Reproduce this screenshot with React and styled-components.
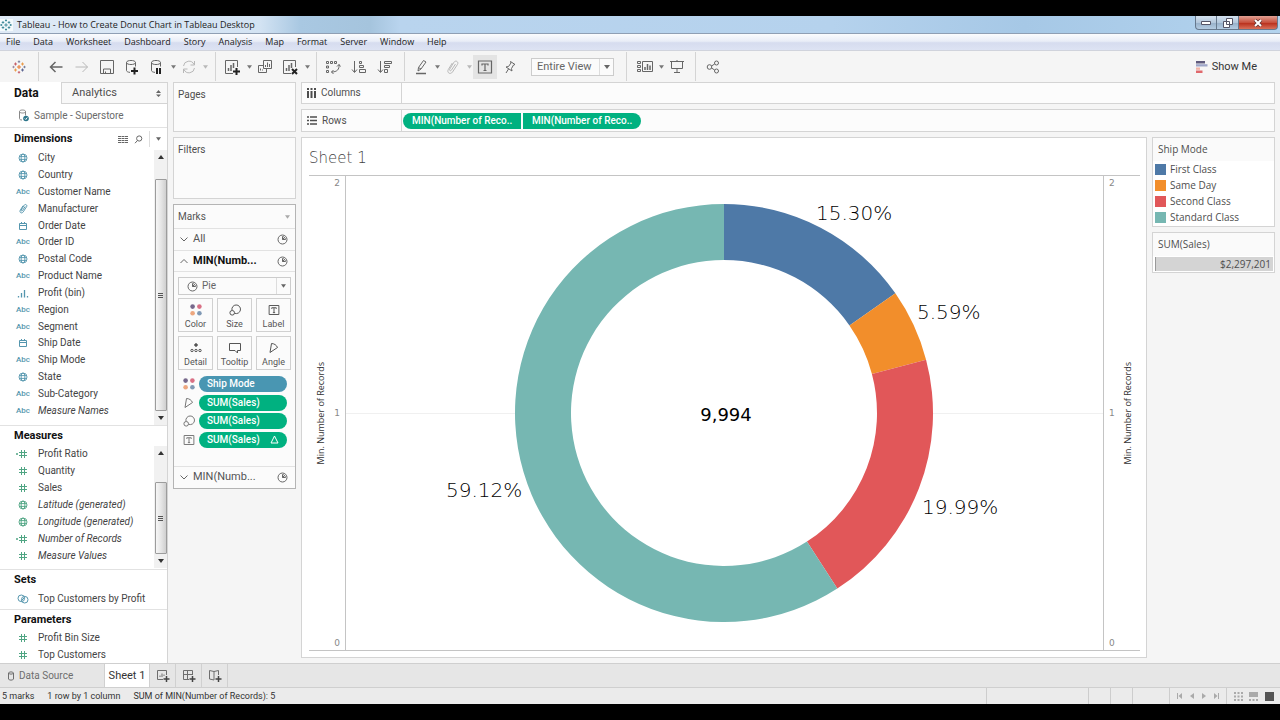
import React, {useState} from 'react';
import styled, {createGlobalStyle, css} from 'styled-components';

const GlobalStyle = createGlobalStyle`
  * {
    box-sizing: border-box;
  }
  body {
    margin: 0;
    background-color: #000;
  }
  button, select {
    margin: 0;
    padding: 0;
    border: 0;
    background: none;
    color: inherit;
    font: inherit;
  }
  svg {
    display: block;
    flex: none;
  }
`;

const uiFont = `Roboto, "Liberation Sans", sans-serif`;
const systemFont = `"Open Sans", "Noto Sans", sans-serif`;
const chartFont = `"DejaVu Sans", sans-serif`;
const line = '#d4d4d4';
const blue = '#4996b2';
const green = '#00b180';

const Window = styled.div`
  display: flex;
  flex-direction: column;
  min-height: 100vh;
  border: solid #000;
  border-width: 16px 0;
  background-color: #f5f5f5;
  color: #4e4e4e;
  font-family: ${uiFont};
  font-size: 10px;
  line-height: 16px;
`;

/* title bar and menu */

const TitleBar = styled.header`
  display: flex;
  align-items: center;
  height: 18px;
  padding-right: 2px;
  border-bottom: 1px solid #8f9fb4;
  background: linear-gradient(90deg, #dfeaf6 0, #d3e3f3 260px, #a9c8e2 300px, #a5c4dd 370px, #b9d4ee 400px, #b5d2ed 65%, #a6c8e6 80%, #b3d3ee 100%);
`;

const AppIcon = styled.span`
  display: flex;
  width: 13px;
  margin-right: 4px;
  background-color: #f4fafc;
`;

const WindowTitle = styled.h1`
  flex: 1;
  margin: 0;
  color: #222;
  font-family: ${systemFont};
  font-size: 9px;
  font-weight: 400;
  line-height: 16px;
`;

const WindowButton = styled.button`
  display: flex;
  align-items: center;
  justify-content: center;
  align-self: flex-start;
  width: ${props => props.$close ? '39px' : '22px'};
  height: 14px;
  border: 1px solid #66788c;
  border-top: 0;
  border-left-width: ${props => props.$first ? '1px' : 0};
  border-radius: ${props => props.$close ? '0 0 4px 0' : props.$first ? '0 0 0 4px' : 0};
  background: ${props => props.$close
    ? 'linear-gradient(#e0a093, #c8503d 50%, #b9301c 55%, #d8705a)'
    : 'linear-gradient(#d3e1ee, #b4c8dc 50%, #98b1ca 55%, #b4cce2)'};
`;

const MenuBar = styled.nav`
  display: flex;
  height: 17px;
  border-bottom: 1px solid #d0d3dc;
  background: linear-gradient(#fbfcfe, #e9edf7 45%, #d6dcef 55%, #dde3f3);
`;

const MenuItem = styled.button`
  padding: 0 7px 0 6px;
  color: #1c1c1c;
  font-family: ${systemFont};
  font-size: 9px;
  line-height: 16px;
`;

/* toolbar */

const Toolbar = styled.div`
  display: flex;
  align-items: center;
  height: 31px;
  padding-right: 23px;
  background-color: #f5f5f5;
`;

const ToolGroup = styled.div`
  display: flex;
  align-items: center;
  height: 29px;
  padding-left: ${props => props.$left || 0}px;
  padding-right: ${props => props.$right || 0}px;
  border-right: 1px solid ${props => props.$last ? 'transparent' : line};
`;

const ToolButton = styled.button`
  display: flex;
  align-items: center;
  justify-content: center;
  width: ${props => props.$wide ? '26px' : '24px'};
  height: 24px;
  color: ${props => props.$off ? '#b8b8b8' : '#666'};
  background-color: ${props => props.$pressed ? '#e4e4e4' : 'transparent'};
`;

const LogoButton = styled(ToolButton)`
  width: 38px;
`;

const CaretButton = styled.button`
  display: flex;
  align-items: center;
  justify-content: center;
  width: 8px;
  height: 24px;
  color: ${props => props.$off ? '#b8b8b8' : '#777'};
`;

const ShowMe = styled.button`
  display: flex;
  align-items: center;
  gap: 4px;
  margin-left: auto;
  color: #333;
  font-size: 11px;
`;

const SelectBox = styled.label`
  display: flex;
  align-items: center;
  height: 18px;
  border: 1px solid #ccc;
  background-color: #fbfbfb;
  color: #666;
  ${props => props.$toolbar ? css`
    width: 83px;
    margin-left: 8px;
    padding-left: 5px;
    font-size: 11px;
  ` : css`
    margin: 5px 4px 0;
    padding-left: 8px;
  `}

  select {
    flex: 1;
    min-width: 0;
    margin-left: ${props => props.$toolbar ? 0 : '4px'};
    appearance: none;
    outline: 0;
  }
`;

const SelectArrow = styled.span`
  display: flex;
  align-items: center;
  justify-content: center;
  width: 14px;
  height: 16px;
  border-left: 1px solid #ddd;
`;

/* data pane */

const Body = styled.div`
  display: flex;
  flex: 1;
`;

const DataPane = styled.aside`
  display: flex;
  flex-direction: column;
  width: 168px;
  border-right: 1px solid ${line};
  background-color: #fff;
`;

const PaneTabs = styled.div`
  display: flex;
  height: 22px;
`;

const PaneTab = styled.button`
  display: flex;
  align-items: center;
  justify-content: space-between;
  text-align: left;
  ${props => props.$active ? css`
    width: 61px;
    padding-left: 14px;
    color: #111;
    font-size: 12px;
    font-weight: 700;
  ` : css`
    flex: 1;
    padding: 0 6px 0 10px;
    border: solid ${line};
    border-width: 1px 0 1px 1px;
    background-color: #f8f8f8;
    font-size: 11px;
  `}
`;

const DataSource = styled.button`
  display: flex;
  align-items: center;
  gap: 5px;
  height: 24px;
  padding-left: 18px;
  border-bottom: 1px solid #e2e2e2;
  color: #6a6a6a;
`;

const Section = styled.section`
  padding-bottom: ${props => props.$bottom || 0}px;
  border-bottom: ${props => props.$last ? 0 : '1px solid #e2e2e2'};
`;

const SectionHead = styled.div`
  display: flex;
  align-items: center;
  gap: 6px;
  height: ${props => props.$tall ? '22px' : '20px'};
  padding: 0 6px 0 14px;
  color: #666;

  h2 {
    flex: 1;
    margin: 0;
    color: #111;
    font-size: 11px;
    font-weight: 700;
  }
`;

const SectionBody = styled.div`
  display: flex;
  align-items: flex-start;
`;

const FieldList = styled.ul`
  display: grid;
  grid-auto-rows: 1fr;
  flex: 1;
  height: ${props => props.$height}px;
  margin: 0;
  padding: 0;
  list-style: none;
`;

const Field = styled.li`
  display: flex;
  align-items: center;
  color: #444;
  font-style: ${props => props.$italic ? 'italic' : 'normal'};
  white-space: nowrap;
`;

const FieldIcon = styled.span`
  display: flex;
  justify-content: center;
  width: 30px;
  margin-left: 8px;
  color: ${props => props.$measure ? '#4fa583' : '#5596ae'};
`;

const AbcIcon = styled.b`
  font-size: 8px;
  font-style: normal;
  font-weight: 500;
`;

const ScrollBar = styled.div`
  display: flex;
  flex-direction: column;
  align-items: center;
  width: 13px;
  height: ${props => props.$height}px;
  background-color: #f1f1f1;
`;

const ScrollArrow = styled.button`
  display: flex;
  align-items: center;
  justify-content: center;
  width: 13px;
  height: 14px;
  color: #333;
`;

const ScrollThumb = styled.div`
  display: flex;
  align-items: center;
  justify-content: center;
  flex: 1;
  width: 12px;
  margin-top: ${props => props.$offset}px;
  border: 1px solid #9c9c9c;
  border-radius: 1px;
  background: linear-gradient(90deg, #f6f6f6, #e6e6e6 50%, #cfcfcf);
  color: #555;
`;

/* cards */

const Cards = styled.div`
  display: flex;
  flex-direction: column;
  gap: 5px;
  width: 123px;
  margin-left: 5px;
`;

const Card = styled.section`
  border: 1px solid ${props => props.$strong ? '#b4b4b4' : line};
  background-color: #fbfbfb;
`;

const DropCard = styled(Card)`
  height: ${props => props.$tall ? '62px' : '50px'};
  padding: 4px 4px;

  h2 {
    margin: 0;
    font-size: 10px;
    font-weight: 400;
  }
`;

const CardHead = styled.div`
  display: flex;
  align-items: center;
  justify-content: space-between;
  height: 23px;
  padding: 0 5px 0 4px;
  color: #aaa;

  h2 {
    margin: 0;
    color: #555;
    font-size: 10px;
    font-weight: 400;
  }
`;

const MarkLayer = styled.button`
  display: flex;
  align-items: center;
  gap: 4px;
  width: 100%;
  height: 22px;
  padding: 0 7px 0 5px;
  border-top: 1px solid #e2e2e2;
  border-bottom: 1px solid ${props => props.$open ? '#e2e2e2' : 'transparent'};
  color: #666;
  font-size: 11px;
  text-align: left;

  span {
    flex: 1;
    color: ${props => props.$open ? '#111' : '#555'};
    font-weight: ${props => props.$open ? 700 : 400};
  }
`;

const MarkButtons = styled.div`
  display: grid;
  grid-template-columns: repeat(3, 1fr);
  gap: 4px;
  padding: 3px 4px 0;
`;

const MarkButton = styled.button`
  display: flex;
  flex-direction: column;
  align-items: center;
  justify-content: space-between;
  height: 34px;
  padding-top: 5px;
  border: 1px solid #d0d0d0;
  color: #555;
  font-size: 9px;
  line-height: 14px;
`;

const PillList = styled.ul`
  display: grid;
  grid-auto-rows: 1fr;
  height: 74px;
  margin: 5px 0 17px;
  padding: 0 8px 0 9px;
  list-style: none;

  li {
    display: flex;
    align-items: center;
    color: #777;
  }
`;

const PillIcon = styled.span`
  display: flex;
  justify-content: center;
  width: 12px;
  margin-right: 4px;
`;

const Pill = styled.button`
  display: flex;
  align-items: center;
  justify-content: space-between;
  height: 16px;
  background-color: ${props => props.$dimension ? blue : green};
  color: #fff;
  font-weight: 500;
  white-space: nowrap;
  ${props => props.$shelf ? css`
    width: 118px;
    padding: 0 9px;
    border-radius: ${props.$shelf === 'left' ? '8px 0 0 8px' : '0 8px 8px 0'};
  ` : css`
    flex: 1;
    padding: 0 8px;
    border-radius: 8px;
  `}
`;

/* worksheet */

const Main = styled.main`
  display: flex;
  flex-direction: column;
  flex: 1;
  gap: 5px;
  min-width: 0;
  margin: 0 5px 5px;
`;

const Shelf = styled.section`
  display: flex;
  height: ${props => props.$tall ? '23px' : '22px'};
  border: 1px solid ${line};
  background-color: #fcfcfc;
`;

const ShelfName = styled.div`
  display: flex;
  align-items: center;
  gap: 5px;
  width: 100px;
  padding-left: 5px;
  border-right: 1px solid ${line};
`;

const ShelfPills = styled.div`
  display: flex;
  align-items: center;
  gap: 2px;
  padding-left: 1px;
`;

const SheetRow = styled.div`
  display: flex;
  flex: 1;
  gap: 5px;
`;

const Sheet = styled.section`
  display: flex;
  flex-direction: column;
  flex: 1;
  min-width: 0;
  padding: 0 6px 6px 7px;
  border: 1px solid ${line};
  background-color: #fff;

  h2 {
    height: 37px;
    margin: 0;
    color: #444;
    font-family: ${chartFont};
    font-size: 15px;
    font-weight: 200;
    line-height: 40px;
  }
`;

const Chart = styled.div`
  display: flex;
  flex: 1;
  border: solid #c4c4c4;
  border-width: 1px 0;
`;

const Axis = styled.div`
  display: flex;
  align-items: center;
  justify-content: space-between;
  flex-direction: ${props => props.$right ? 'row-reverse' : 'row'};
  width: 36px;
  padding: ${props => props.$right ? '0 4px 0 5px' : '0 5px 0 4px'};
  font-family: ${systemFont};
`;

const AxisTitle = styled.span`
  color: #333;
  font-size: 9px;
  line-height: 16px;
  writing-mode: vertical-rl;
  transform: rotate(180deg);
`;

const Ticks = styled.div`
  display: flex;
  flex-direction: column;
  justify-content: space-between;
  align-self: stretch;
  color: #888;
  font-family: ${chartFont};
  font-size: 9px;
  line-height: 14px;
`;

const Plot = styled.div`
  display: flex;
  flex: 1;
  min-width: 0;
  border: solid #c4c4c4;
  border-width: 0 1px;
  overflow: hidden;

  svg {
    width: 100%;
    height: 474px;
    overflow: visible;
  }

  text {
    fill: #000;
    font-family: ${chartFont};
    font-size: 20px;
    font-weight: 200;
  }
`;

const CenterLabel = styled.text`
  && {
    font-size: 18px;
    font-weight: 400;
  }
`;

const Legends = styled.aside`
  display: flex;
  flex-direction: column;
  gap: 5px;
  width: 123px;
  font-family: ${systemFont};
`;

const Legend = styled.section`
  padding-bottom: 1px;
  border: 1px solid ${line};
  background-color: #fff;

  h3 {
    margin: 0;
    padding-left: 5px;
    background-color: #fafafa;
    font-size: 10px;
    font-weight: 400;
    line-height: 23px;
  }

  ul {
    margin: 0;
    padding: 0;
    list-style: none;
  }

  li {
    display: flex;
    align-items: center;
    gap: 4px;
    height: 16px;
    padding-left: 2px;
  }
`;

const Swatch = styled.span`
  width: 11px;
  height: 11px;
  background-color: ${props => props.$color};
`;

const SizeBar = styled.div`
  margin: 1px 1px 0 2px;
  padding-right: 2px;
  border-left: 1px solid #999;
  background-color: #d4d4d4;
  line-height: 14px;
  text-align: right;
`;

/* sheet tabs and status bar */

const SheetTabs = styled.div`
  display: flex;
  height: 24px;
  border-top: 1px solid #cfcfcf;
  background-color: #e6e6e6;
`;

const SheetTab = styled.button`
  display: flex;
  align-items: center;
  justify-content: ${props => props.$source ? 'flex-start' : 'center'};
  gap: 4px;
  width: ${props => props.$source ? '105px' : props.$active ? '45px' : '26px'};
  padding-left: ${props => props.$source ? '7px' : 0};
  border-right: 1px solid #d0d0d0;
  background-color: ${props => props.$active ? '#fff' : 'transparent'};
  color: ${props => props.$active ? '#333' : '#6e6e6e'};
  font-size: ${props => props.$active ? '11px' : '10px'};
  white-space: nowrap;
`;

const StatusBar = styled.footer`
  display: flex;
  gap: 13px;
  height: 17px;
  padding-left: 2px;
  border-top: 1px solid #cfcfcf;
  background-color: #ebebeb;
  color: #333;
  font-size: 9px;
`;

const StatusCells = styled.div`
  display: flex;
  margin-left: auto;
`;

const StatusCell = styled.div`
  display: flex;
  align-items: center;
  justify-content: space-evenly;
  width: ${props => props.$width}px;
  border-left: 1px solid #cdcdcd;
  color: #aaa;
`;

const StatusButton = styled.button`
  display: flex;
  color: ${props => props.$active ? '#555' : '#aaa'};
`;

/* icons */

function Icon({size = 16, height, children, ...rest}) {
  return (
    <svg width={size} height={height || size} viewBox={`0 0 ${size} ${height || size}`}
      fill="none" stroke="currentColor" strokeWidth="1" aria-hidden="true" {...rest}>
      {children}
    </svg>
  );
}

const Caret = ({size = 5}) => (
  <svg width={size} height="4" viewBox="0 0 6 4" aria-hidden="true"><path d="M0 0h6L3 4z" fill="currentColor" /></svg>
);

const CaretUp = () => (
  <svg width="6" height="4" viewBox="0 0 6 4" aria-hidden="true"><path d="M0 4h6L3 0z" fill="currentColor" /></svg>
);

const crosses = [
  [7, 7, 2, '#e8762d'], [3.5, 4, 1.5, '#c7606a'], [10.5, 4, 1.5, '#eb9c4b'],
  [3.5, 10, 1.5, '#eb9c4b'], [10.5, 10, 1.5, '#5c6692'],
  [7, 1.7, 1.2, '#7a7f9c'], [7, 12.3, 1.2, '#c7606a'], [1.5, 7, 1.2, '#a08aa0'], [12.5, 7, 1.2, '#7a7f9c'],
];

const Logo = ({size = 14, mono}) => (
  <svg width={size} height={size} viewBox="0 0 14 14" aria-hidden="true">
    {crosses.map(([x, y, r, color]) => (
      <path key={`${x}-${y}`} d={`M${x - r} ${y}h${2 * r}M${x} ${y - r}v${2 * r}`} stroke={mono || color} strokeWidth="1" />
    ))}
  </svg>
);

const ArrowLeft = () => <Icon strokeWidth="1.5"><path d="M14.5 8H2.5M7.500 3L2.500 8l5 5" /></Icon>;
const ArrowRight = () => <Icon><path d="M1.500 8h12M8.500 3l5 5-5 5" /></Icon>;
const Save = () => <Icon><path d="M1.500 1.500h13v13h-13zM4.500 14v-4h7v4M6.500 12.500v1.500" /></Icon>;
const Cylinder = () => <path d="M2.500 3.500c0-2.700 9-2.700 9 0M2.500 3.500c0 2.700 9 2.700 9 0M2.500 3.500v8c0 1 1.500 1.700 3.500 1.900M11.500 3.500v4" />;
const DataAdd = () => <Icon><Cylinder /><path d="M10.500 8.500v7M7 12h7" stroke="#222" strokeWidth="2" /></Icon>;
const DataPause = () => <Icon><Cylinder /><path d="M8 9v6M11 9v6" stroke="#222" strokeWidth="2" /></Icon>;
const Refresh = () => <Icon><path d="M2.500 7a5.500 5.500 0 0 1 10.500-1.500M13.500 9A5.500 5.500 0 0 1 3 10.500M13.500 2v4h-4M2.500 14v-4h4" /></Icon>;
const Bars = () => <path d="M4.500 9v3M7 6v6M9.500 4v5" strokeWidth="1.5" />;
const ChartAdd = () => <Icon><path d="M9 14.500H1.500v-13h12V8" /><Bars /><path d="M12.500 9v7M9 12.500h7" stroke="#222" strokeWidth="2" /></Icon>;
const ChartClear = () => <Icon><path d="M9 14.500H1.500v-13h12V8" /><Bars /><path d="M10 10l5 5M15 10l-5 5" stroke="#222" strokeWidth="2" /></Icon>;
const Duplicate = () => <Icon><path d="M6.500 1.500h8v8h-8zM6 6.500H1.500v7h8v-3.500M8.500 8V6M10.500 8V3.500M12.500 8V5M3.500 11.500v-2M5.500 11.500v-1" /></Icon>;
const Swap = () => <Icon><path d="M1.500 2.500h2v2h-2zM5.500 2.500h2v2h-2zM9.500 2.500h2v2h-2zM1.500 7h2v2h-2zM1.500 11.500h2v2h-2zM14 5.500c.5 5-2 7.500-7.500 7.500M12 7.500l2-2 1.500 2M8.500 11l-2 2 2 2" /></Icon>;
const SortAsc = () => <Icon><path d="M3.500 2v11M1 10.500l2.500 3 2.500-3M8.500 2.500h2v2h-2zM8.500 6.500h4v2h-4zM8.500 10.500h6v3h-6z" /></Icon>;
const SortDesc = () => <Icon><path d="M3.500 2v11M1 10.500l2.500 3 2.500-3M7.500 2.500h7v2h-7zM7.500 6.500h5v2h-5zM7.500 10.500h3v3h-3z" /></Icon>;
const Pen = () => <Icon><path d="M5 12l.5-3.500 5-7 2.500 1.500-5 7zM5.500 8.500L8 10" /><path d="M3 14.500h10" strokeWidth="1.500" /></Icon>;
const Clip = ({size = 16}) => (
  <svg width={size} height={size} viewBox="0 0 16 16" fill="none" stroke="currentColor" strokeWidth={size < 14 ? 1.4 : 1} aria-hidden="true">
    <path d="M10.500 5l-4 6c-.8 1.500-2.500.5-1.800-.8l4.300-7c1.500-2.300 5-.5 3.500 2.200l-5 7.600c-2 3-6 .8-4.200-2.500l4-6.500" />
  </svg>
);
const LabelT = ({size = 16}) => (
  <svg width={size} height={size} viewBox="0 0 16 16" fill="none" stroke="currentColor" strokeWidth={size < 14 ? 1.3 : 1.2} aria-hidden="true">
    <path d="M1.500 2h13v12h-13zM5 6.500V5h6v1.500M8 5v6.500M6.500 11.500h3" />
  </svg>
);
const Pin = () => <Icon><path d="M8.500 2.500l4.500 3-1.500.5-2 3.500.5 2.500-6-4 2.500-.5L9 4zM6.500 10L4 14" /></Icon>;
const Gallery = () => (
  <Icon size={18}>
    <path d="M6.500 3.500h10v10h-10zM1.500 3.500h3v2h-3zM1.500 7.500h3v2h-3zM1.500 11.500h3v2h-3z" />
    <path d="M9 12V9M11.500 12V6M14 12V7.500" strokeWidth="1.500" />
  </Icon>
);
const Present = () => <Icon><path d="M1 2.500h14M2.500 2.500v7h11v-7M8 9.500v4M5 13.500h6M8 1v1" /></Icon>;
const Share = () => <Icon><circle cx="4.500" cy="8" r="2.300" /><circle cx="11.500" cy="4" r="2" /><circle cx="11.500" cy="12" r="2" /><path d="M6.500 7l3.200-2M6.500 9l3.200 2" /></Icon>;

const ShowMeIcon = () => (
  <svg width="12" height="12" viewBox="0 0 12 12" aria-hidden="true">
    <path d="M0 0h9v2.500H0z" fill="#5f5a7c" />
    <path d="M0 3.200h11.500v2.300H0z" fill="#9ea6c8" />
    <path d="M0 6.500h4v2.300H0z" fill="#f2b3a6" />
    <path d="M0 9.500h6.500V12H0z" fill="#e0686c" />
  </svg>
);

const Globe = () => <Icon size={10} strokeWidth="0.9"><circle cx="5" cy="5" r="4" /><ellipse cx="5" cy="5" rx="1.900" ry="4" /><path d="M1.300 3.600h7.400M1.300 6.400h7.400" /></Icon>;
const DateIcon = () => <Icon size={10}><path d="M1.500 2.500h7v6h-7zM1.500 4.500h7M3.500 1v1.500M6.500 1v1.500" /></Icon>;
const Bin = () => <Icon size={12} height={10}><path d="M1.500 8v1.500M4.500 5v4.500M7.500 2v7.500M10.500 8v1.500" strokeWidth="1.300" /></Icon>;
const Hash = ({calc}) => (
  <Icon size={14} height={10}>
    <path d="M5.500 1v8M8.500 1v8M3 3.500h8M3 6.500h8" />
    {calc && <path d="M0 5h2" strokeWidth="1.500" />}
  </Icon>
);
const SetIcon = () => <Icon size={12} height={10}><circle cx="4.300" cy="4.300" r="3.300" /><circle cx="7.700" cy="5.700" r="3.300" /><path d="M4.500 6.500l3-3" /></Icon>;
const SourceIcon = () => (
  <Icon size={11} height={13} stroke="#888">
    <path d="M1.500 2.500c0-2 6-2 6 0s-6 2-6 0v7c0 1 1 1.500 2.500 1.500M7.500 2.500v4" />
    <circle cx="8" cy="9.500" r="2.800" fill="#2b7489" stroke="none" />
    <path d="M6.800 9.500l1 1 1.500-2" stroke="#fff" />
  </Icon>
);
const GridIcon = () => <Icon size={10} height={7}><path d="M0 .5h10M0 2.500h10M0 4.500h10M0 6.500h10" strokeDasharray="3 .5" /></Icon>;
const Search = () => <Icon size={9}><circle cx="5.200" cy="3.500" r="2.600" /><path d="M3.500 5.500L1 8.200" /></Icon>;
const PieIcon = () => <Icon size={11} height={11}><circle cx="5.500" cy="5.500" r="4.500" /><path d="M5.500 2.500v3h3c0-1.500-1.500-3-3-3zM5.500 5.500L7.500 3.500" /></Icon>;
const ChevronDown = () => <Icon size={10}><path d="M1.500 3.500L5 7l3.500-3.500" /></Icon>;
const ChevronUp = () => <Icon size={10}><path d="M1.500 7L5 3.500 8.500 7" /></Icon>;
const ColorDots = () => (
  <svg width="12" height="12" viewBox="0 0 12 12" aria-hidden="true">
    <circle cx="2.600" cy="2.600" r="2.300" fill="#76688b" />
    <circle cx="9.400" cy="2.600" r="2.300" fill="#d97085" />
    <circle cx="2.600" cy="9.200" r="2.300" fill="#eda77f" />
    <circle cx="9.400" cy="9.200" r="2.300" fill="#8099b5" />
  </svg>
);
const SizeIcon = () => <Icon size={12}><path d="M3 6.200a4.300 4.300 0 1 1 2.700 3.100" /><circle cx="3.200" cy="8.800" r="2.300" /></Icon>;
const DetailIcon = () => <Icon size={12}><circle cx="6" cy="3" r="1.300" fill="currentColor" /><circle cx="2" cy="8.500" r="1.200" /><circle cx="6" cy="8.500" r="1.200" /><circle cx="10" cy="8.500" r="1.200" /></Icon>;
const TooltipIcon = () => <Icon size={12}><path d="M.5 1.500h11v7H8.500v2.500L6 8.500H.5z" /></Icon>;
const AngleIcon = () => <Icon size={12}><path d="M3.500 1.500L2 10.500l7.500-5C8.500 3 6 1.500 3.500 1.500z" /></Icon>;
const Delta = () => <Icon size={9} stroke="#fff"><path d="M4.500 1L8 8H1z" /></Icon>;
const Grip = () => <Icon size={5} height={7}><path d="M0 1.500h5M0 3.500h5M0 5.500h5" /></Icon>;
const ColumnsIcon = () => <Icon size={9} height={10} strokeWidth="2"><path d="M1 0v2M4.500 0v2M8 0v2M1 3v7M4.500 3v7M8 3v7" /></Icon>;
const RowsIcon = () => <Icon size={10} height={9} strokeWidth="1.500"><path d="M0 1h2M0 4.500h2M0 8h2M3 1h7M3 4.500h7M3 8h7" /></Icon>;
const Plus = () => <path d="M10.500 7v6M7.500 10h6" stroke="#444" strokeWidth="1.500" />;
const NewSheet = () => <Icon size={14}><path d="M7 10.500H1.500v-9h9V6M4 8V6.500M6 8V4.500M8 7V5.500" /><Plus /></Icon>;
const NewDashboard = () => <Icon size={14}><path d="M7 10.500H1.500v-9h9V6M1.500 5.500h9M5.500 1.500v9" /><Plus /></Icon>;
const NewStory = () => <Icon size={14}><path d="M6 2.500L1.500 1.500v8.500l4.500 1V2.500l4.500-1V6" /><Plus /></Icon>;
const SmallCylinder = () => <Icon size={8} height={10}><path d="M1.500 2c0-1.500 5-1.500 5 0s-5 1.500-5 0v6c0 1.500 5 1.500 5 0V2" /></Icon>;

const fieldIcons = {
  geo: <Globe />,
  text: <AbcIcon>Abc</AbcIcon>,
  group: <Clip size={11} />,
  date: <DateIcon />,
  bin: <Bin />,
  number: <Hash />,
  calc: <Hash calc />,
  set: <SetIcon />,
};

const menus = ['File', 'Data', 'Worksheet', 'Dashboard', 'Story', 'Analysis', 'Map', 'Format', 'Server', 'Window', 'Help'];

const dimensions = [
  ['geo', 'City'],
  ['geo', 'Country'],
  ['text', 'Customer Name'],
  ['group', 'Manufacturer'],
  ['date', 'Order Date'],
  ['text', 'Order ID'],
  ['geo', 'Postal Code'],
  ['text', 'Product Name'],
  ['bin', 'Profit (bin)'],
  ['text', 'Region'],
  ['text', 'Segment'],
  ['date', 'Ship Date'],
  ['text', 'Ship Mode'],
  ['geo', 'State'],
  ['text', 'Sub-Category'],
  ['text', 'Measure Names', true],
];

const measures = [
  ['calc', 'Profit Ratio'],
  ['number', 'Quantity'],
  ['number', 'Sales'],
  ['geo', 'Latitude (generated)', true],
  ['geo', 'Longitude (generated)', true],
  ['calc', 'Number of Records', true],
  ['number', 'Measure Values', true],
];

const markButtons = [
  ['Color', <ColorDots />],
  ['Size', <SizeIcon />],
  ['Label', <LabelT size={12} />],
  ['Detail', <DetailIcon />],
  ['Tooltip', <TooltipIcon />],
  ['Angle', <AngleIcon />],
];

const slices = [
  {name: 'First Class', share: 15.30, color: '#4e79a7', x: 470, y: 44},
  {name: 'Same Day', share: 5.59, color: '#f28e2b', x: 571, y: 143},
  {name: 'Second Class', share: 19.99, color: '#e15759', x: 576, y: 338},
  {name: 'Standard Class', share: 59.12, color: '#76b7b2', x: 100, y: 321},
];

function arcPath(from, to, cx, cy, outer, inner) {
  const point = (share, r) => {
    const a = share / 100 * Math.PI * 2;
    return `${cx + r * Math.sin(a)} ${cy - r * Math.cos(a)}`;
  };
  const large = to - from > 50 ? 1 : 0;
  return `M${point(from, outer)}A${outer} ${outer} 0 ${large} 1 ${point(to, outer)}`
    + `L${point(to, inner)}A${inner} ${inner} 0 ${large} 0 ${point(from, inner)}Z`;
}

function Donut() {
  let start = 0;
  return (
    <Plot>
      <svg viewBox="0 0 757 474" role="img" aria-label="Sales by ship mode">
        <path d="M-1000 237.500H2000" stroke="#f0f0f0" />
        <circle cx="378" cy="237" r="160" fill="#fff" />
        {slices.map(slice => {
          const from = start;
          start += slice.share;
          return <path key={slice.name} d={arcPath(from, start, 378, 237, 209, 153)} fill={slice.color} />;
        })}
        {slices.map(slice => (
          <text key={slice.name} x={slice.x} y={slice.y}>{slice.share.toFixed(2)}%</text>
        ))}
        <CenterLabel x="380" y="245" textAnchor="middle">9,994</CenterLabel>
      </svg>
    </Plot>
  );
}

function Fields({items, height, measure}) {
  return (
    <FieldList $height={height}>
      {items.map(([type, name, generated]) => (
        <Field key={name} $italic={generated}>
          <FieldIcon $measure={measure}>{fieldIcons[type]}</FieldIcon>
          {name}
        </Field>
      ))}
    </FieldList>
  );
}

function Scroll({height, offset}) {
  return (
    <ScrollBar $height={height}>
      <ScrollArrow aria-label="Scroll up"><CaretUp /></ScrollArrow>
      <ScrollThumb $offset={offset}><Grip /></ScrollThumb>
      <ScrollArrow aria-label="Scroll down"><Caret size={6} /></ScrollArrow>
    </ScrollBar>
  );
}

function MainToolbar() {
  const [view, setView] = useState('Entire View');
  return (
    <Toolbar>
      <ToolGroup>
        <LogoButton aria-label="Start page"><Logo /></LogoButton>
      </ToolGroup>
      <ToolGroup $left={4} $right={6}>
        <ToolButton $wide aria-label="Undo"><ArrowLeft /></ToolButton>
        <ToolButton $wide $off aria-label="Redo"><ArrowRight /></ToolButton>
        <ToolButton aria-label="Save"><Save /></ToolButton>
        <ToolButton $wide aria-label="New data source"><DataAdd /></ToolButton>
        <ToolButton aria-label="Pause updates"><DataPause /></ToolButton>
        <CaretButton aria-label="Update options"><Caret /></CaretButton>
        <ToolButton $off aria-label="Run update"><Refresh /></ToolButton>
        <CaretButton $off aria-label="Run options"><Caret /></CaretButton>
      </ToolGroup>
      <ToolGroup $left={3} $right={5}>
        <ToolButton $wide aria-label="New worksheet"><ChartAdd /></ToolButton>
        <CaretButton aria-label="New options"><Caret /></CaretButton>
        <ToolButton aria-label="Duplicate"><Duplicate /></ToolButton>
        <ToolButton $wide aria-label="Clear sheet"><ChartClear /></ToolButton>
        <CaretButton aria-label="Clear options"><Caret /></CaretButton>
      </ToolGroup>
      <ToolGroup $left={3} $right={6}>
        <ToolButton $wide aria-label="Swap rows and columns"><Swap /></ToolButton>
        <ToolButton $wide aria-label="Sort ascending"><SortAsc /></ToolButton>
        <ToolButton $wide aria-label="Sort descending"><SortDesc /></ToolButton>
      </ToolGroup>
      <ToolGroup $left={4} $right={12}>
        <ToolButton aria-label="Highlight"><Pen /></ToolButton>
        <CaretButton aria-label="Highlight options"><Caret /></CaretButton>
        <ToolButton $off aria-label="Group members"><Clip /></ToolButton>
        <CaretButton $off aria-label="Group options"><Caret /></CaretButton>
        <ToolButton $pressed aria-label="Show mark labels"><LabelT /></ToolButton>
        <ToolButton $wide aria-label="Fix axes"><Pin /></ToolButton>
        <SelectBox $toolbar>
          <select aria-label="Fit" value={view} onChange={e => setView(e.target.value)}>
            <option>Standard</option>
            <option>Entire View</option>
          </select>
          <SelectArrow><Caret size={6} /></SelectArrow>
        </SelectBox>
      </ToolGroup>
      <ToolGroup $left={6} $right={6}>
        <ToolButton aria-label="Show or hide cards"><Gallery /></ToolButton>
        <CaretButton aria-label="Card options"><Caret /></CaretButton>
        <ToolButton aria-label="Presentation mode"><Present /></ToolButton>
      </ToolGroup>
      <ToolGroup $left={5} $last>
        <ToolButton aria-label="Share"><Share /></ToolButton>
      </ToolGroup>
      <ShowMe><ShowMeIcon />Show Me</ShowMe>
    </Toolbar>
  );
}

function MarksCard() {
  const [mark, setMark] = useState('Pie');
  return (
    <Card $strong>
      <CardHead><h2>Marks</h2><Caret /></CardHead>
      <MarkLayer><ChevronDown /><span>All</span><PieIcon /></MarkLayer>
      <MarkLayer $open><ChevronUp /><span>MIN(Numb...</span><PieIcon /></MarkLayer>
      <SelectBox>
        <PieIcon />
        <select aria-label="Mark type" value={mark} onChange={e => setMark(e.target.value)}>
          <option>Pie</option>
          <option>Bar</option>
        </select>
        <SelectArrow><Caret /></SelectArrow>
      </SelectBox>
      <MarkButtons>
        {markButtons.map(([name, icon]) => (
          <MarkButton key={name}>{icon}{name}</MarkButton>
        ))}
      </MarkButtons>
      <PillList>
        <li><PillIcon><ColorDots /></PillIcon><Pill $dimension>Ship Mode</Pill></li>
        <li><PillIcon><AngleIcon /></PillIcon><Pill>SUM(Sales)</Pill></li>
        <li><PillIcon><SizeIcon /></PillIcon><Pill>SUM(Sales)</Pill></li>
        <li><PillIcon><LabelT size={12} /></PillIcon><Pill>SUM(Sales)<Delta /></Pill></li>
      </PillList>
      <MarkLayer><ChevronDown /><span>MIN(Numb...</span><PieIcon /></MarkLayer>
    </Card>
  );
}

function App() {
  return (
    <Window>
      <GlobalStyle />
      <TitleBar>
        <AppIcon><Logo size={12} mono="#2d8090" /></AppIcon>
        <WindowTitle>Tableau - How to Create Donut Chart in Tableau Desktop</WindowTitle>
        <WindowButton $first aria-label="Minimize">
          <Icon size={10} height={6}><path d="M.5 1.500h9v3h-9z" fill="#fff" stroke="#556" /></Icon>
        </WindowButton>
        <WindowButton aria-label="Restore">
          <Icon size={10}><path d="M3.500.5h6v6h-6zM.5 3.500h6v6h-6z" fill="#fff" stroke="#556" /></Icon>
        </WindowButton>
        <WindowButton $close aria-label="Close">
          <Icon size={10} height={8}><path d="M2 1l6 6M8 1L2 7" stroke="#633" strokeWidth="3.500" /><path d="M2 1l6 6M8 1L2 7" stroke="#fff" strokeWidth="2" /></Icon>
        </WindowButton>
      </TitleBar>
      <MenuBar>
        {menus.map(name => <MenuItem key={name}>{name}</MenuItem>)}
      </MenuBar>
      <MainToolbar />
      <Body>
        <DataPane>
          <PaneTabs>
            <PaneTab $active>Data</PaneTab>
            <PaneTab>
              Analytics
              <Icon size={5} height={7} stroke="none" fill="#666"><path d="M0 3h5L2.500 0zM0 4.500h5L2.500 7z" /></Icon>
            </PaneTab>
          </PaneTabs>
          <DataSource><SourceIcon />Sample - Superstore</DataSource>
          <Section>
            <SectionHead $tall>
              <h2>Dimensions</h2>
              <GridIcon />
              <Search />
              <Icon size={1} height={16} stroke="#ddd"><path d="M.5 0v16" /></Icon>
              <Caret />
            </SectionHead>
            <SectionBody>
              <Fields items={dimensions} height={269} />
              <Scroll height={275} offset={15} />
            </SectionBody>
          </Section>
          <Section $bottom={1}>
            <SectionHead><h2>Measures</h2></SectionHead>
            <SectionBody>
              <Fields items={measures} height={118} measure />
              <Scroll height={122} offset={22} />
            </SectionBody>
          </Section>
          <Section $bottom={2}>
            <SectionHead><h2>Sets</h2></SectionHead>
            <Fields items={[['set', 'Top Customers by Profit']]} height={17} />
          </Section>
          <Section $last>
            <SectionHead><h2>Parameters</h2></SectionHead>
            <Fields items={[['number', 'Profit Bin Size'], ['number', 'Top Customers']]} height={33} measure />
          </Section>
        </DataPane>
        <Cards>
          <DropCard><h2>Pages</h2></DropCard>
          <DropCard $tall><h2>Filters</h2></DropCard>
          <MarksCard />
        </Cards>
        <Main>
          <Shelf>
            <ShelfName><ColumnsIcon />Columns</ShelfName>
          </Shelf>
          <Shelf $tall>
            <ShelfName><RowsIcon />Rows</ShelfName>
            <ShelfPills>
              <Pill $shelf="left">MIN(Number of Reco..</Pill>
              <Pill $shelf="right">MIN(Number of Reco..</Pill>
            </ShelfPills>
          </Shelf>
          <SheetRow>
            <Sheet>
              <h2>Sheet 1</h2>
              <Chart>
                <Axis>
                  <AxisTitle>Min. Number of Records</AxisTitle>
                  <Ticks><span>2</span><span>1</span><span>0</span></Ticks>
                </Axis>
                <Donut />
                <Axis $right>
                  <AxisTitle>Min. Number of Records</AxisTitle>
                  <Ticks><span>2</span><span>1</span><span>0</span></Ticks>
                </Axis>
              </Chart>
            </Sheet>
            <Legends>
              <Legend>
                <h3>Ship Mode</h3>
                <ul>
                  {slices.map(slice => (
                    <li key={slice.name}><Swatch $color={slice.color} />{slice.name}</li>
                  ))}
                </ul>
              </Legend>
              <Legend>
                <h3>SUM(Sales)</h3>
                <SizeBar>$2,297,201</SizeBar>
              </Legend>
            </Legends>
          </SheetRow>
        </Main>
      </Body>
      <SheetTabs>
        <SheetTab $source><SmallCylinder />Data Source</SheetTab>
        <SheetTab $active>Sheet 1</SheetTab>
        <SheetTab aria-label="New worksheet tab"><NewSheet /></SheetTab>
        <SheetTab aria-label="New dashboard"><NewDashboard /></SheetTab>
        <SheetTab aria-label="New story"><NewStory /></SheetTab>
      </SheetTabs>
      <StatusBar>
        <span>5 marks</span>
        <span>1 row by 1 column</span>
        <span>SUM of MIN(Number of Records): 5</span>
        <StatusCells>
          <StatusCell $width={102} />
          <StatusCell $width={22} />
          <StatusCell $width={22} />
          <StatusCell $width={37} />
          <StatusCell $width={57}>
            <StatusButton aria-label="First sheet"><Icon size={6} stroke="none" fill="currentColor"><path d="M0 0h1v6H0zM5 0v6L1.500 3z" /></Icon></StatusButton>
            <StatusButton aria-label="Previous sheet"><Icon size={4} height={6} stroke="none" fill="currentColor"><path d="M4 0v6L0 3z" /></Icon></StatusButton>
            <StatusButton aria-label="Next sheet"><Icon size={4} height={6} stroke="none" fill="currentColor"><path d="M0 0v6l4-3z" /></Icon></StatusButton>
            <StatusButton aria-label="Last sheet"><Icon size={6} stroke="none" fill="currentColor"><path d="M5 0h1v6H5zM1 0v6l3.500-3z" /></Icon></StatusButton>
          </StatusCell>
          <StatusCell $width={54}>
            <StatusButton aria-label="Sheet sorter"><Icon size={9} strokeWidth="2"><path d="M0 1h9M0 4.500h9M0 8h9" strokeDasharray="2 1.500" /></Icon></StatusButton>
            <StatusButton aria-label="Filmstrip"><Icon size={9} strokeWidth="2"><path d="M0 0h9v5H0z" fill="currentColor" stroke="none" /><path d="M0 8h9" strokeDasharray="2 1.500" /></Icon></StatusButton>
            <StatusButton $active aria-label="Tabs"><Icon size={9}><path d="M0 0h9v9H0z" fill="currentColor" /></Icon></StatusButton>
          </StatusCell>
        </StatusCells>
      </StatusBar>
    </Window>
  );
}

export default App;
